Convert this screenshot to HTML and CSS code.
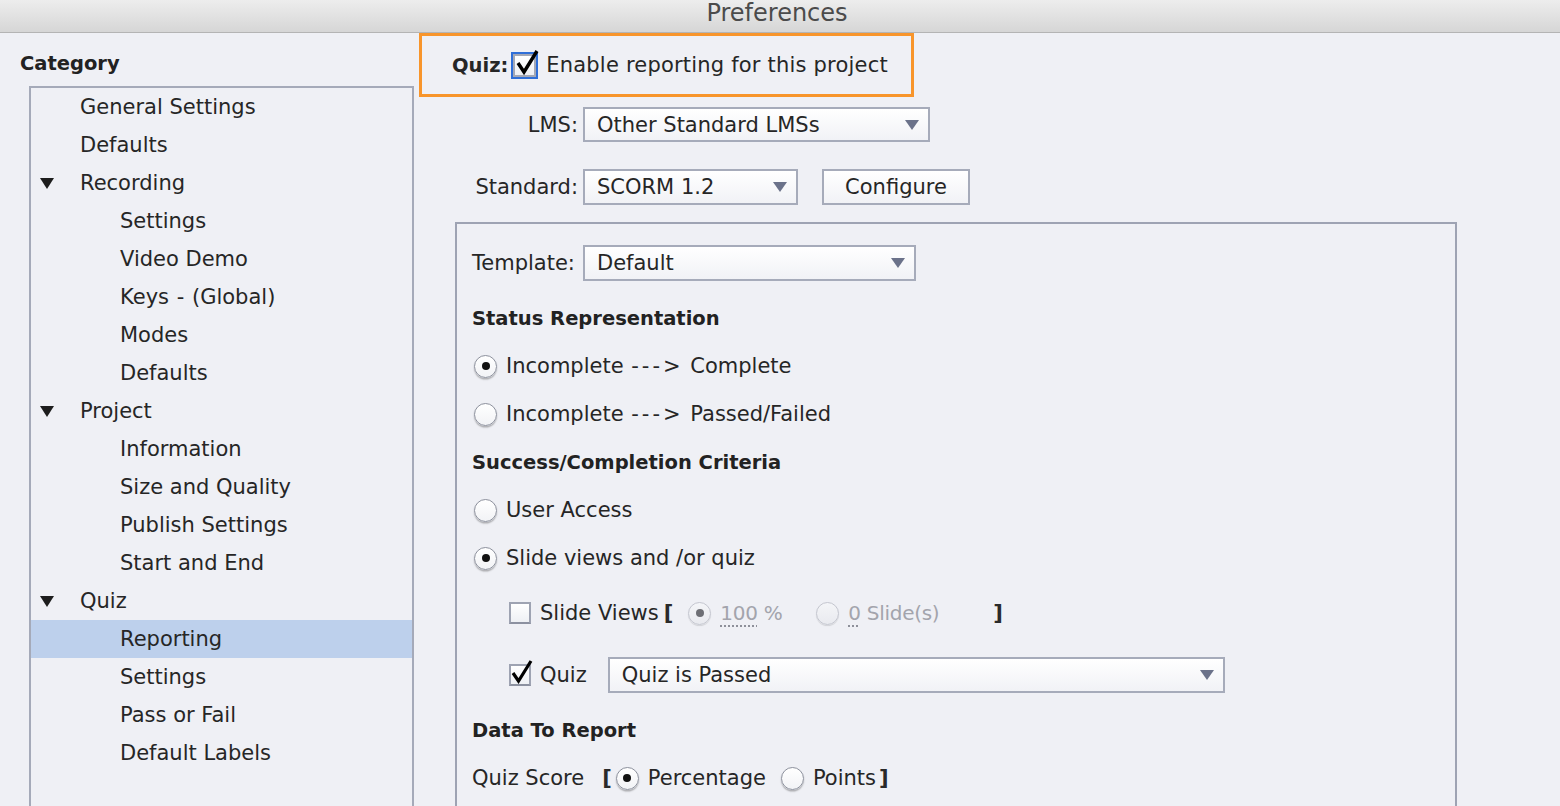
FILE: index.html
```html
<!DOCTYPE html>
<html>
<head>
<meta charset="utf-8">
<title>Preferences</title>
<link rel="stylesheet" href="styles.css">
</head>
<body>
<div class="window">
  <header class="titlebar">Preferences</header>
  <div class="content">
    <aside class="sidebar">
      <h2 class="cat-title">Category</h2>
      <ul class="tree">
        <li class="l1">General Settings</li>
        <li class="l1">Defaults</li>
        <li class="parent"><span class="twisty"><svg width="14" height="11" viewBox="0 0 14 11"><polygon points="0,0 14,0 7,11" fill="#1d1d1d"/></svg></span>Recording</li>
        <li class="l2">Settings</li>
        <li class="l2">Video Demo</li>
        <li class="l2">Keys <span class="dash">-</span> (Global)</li>
        <li class="l2">Modes</li>
        <li class="l2">Defaults</li>
        <li class="parent"><span class="twisty"><svg width="14" height="11" viewBox="0 0 14 11"><polygon points="0,0 14,0 7,11" fill="#1d1d1d"/></svg></span>Project</li>
        <li class="l2">Information</li>
        <li class="l2">Size and Quality</li>
        <li class="l2">Publish Settings</li>
        <li class="l2">Start and End</li>
        <li class="parent"><span class="twisty"><svg width="14" height="11" viewBox="0 0 14 11"><polygon points="0,0 14,0 7,11" fill="#1d1d1d"/></svg></span>Quiz</li>
        <li class="l2 selected">Reporting</li>
        <li class="l2">Settings</li>
        <li class="l2">Pass or Fail</li>
        <li class="l2">Default Labels</li>
      </ul>
    </aside>

    <main class="pane">
      <div class="enable-box">
        <span class="bold">Quiz:</span>
        <span class="focus-ring"><span class="box big"></span><svg class="check check-big" width="26" height="30" viewBox="0 0 26 30"><path d="M5 16 L11 25 L24 4" fill="none" stroke="#000" stroke-width="3.4"/></svg></span>
        <span class="enable-text">Enable reporting for this project</span>
      </div>

      <div class="field-row lms-row">
        <label class="field-label">LMS:</label>
        <div class="select lms-select"><span>Other Standard LMSs</span><svg class="arrow" width="14" height="10" viewBox="0 0 14 10"><polygon points="0,0 14,0 7,10" fill="#6b728a"/></svg></div>
      </div>

      <div class="field-row std-row">
        <label class="field-label">Standard:</label>
        <div class="select std-select"><span>SCORM 1.2</span><svg class="arrow" width="14" height="10" viewBox="0 0 14 10"><polygon points="0,0 14,0 7,10" fill="#6b728a"/></svg></div>
        <button class="button">Configure</button>
      </div>

      <section class="group">
        <div class="template-row">
          <label class="template-label">Template:</label>
          <div class="select tpl-select"><span>Default</span><svg class="arrow" width="14" height="10" viewBox="0 0 14 10"><polygon points="0,0 14,0 7,10" fill="#6b728a"/></svg></div>
        </div>

        <div class="row heading first-heading">Status Representation</div>
        <div class="row"><span class="radio on"></span>Incomplete&nbsp;<span class="arrows">---&gt;</span>&nbsp;Complete</div>
        <div class="row"><span class="radio"></span>Incomplete&nbsp;<span class="arrows">---&gt;</span>&nbsp;Passed/Failed</div>
        <div class="row heading">Success/Completion Criteria</div>
        <div class="row"><span class="radio"></span>User Access</div>
        <div class="row"><span class="radio on"></span>Slide views and /or quiz</div>

        <div class="row sub-row slide-row">
          <span class="box"></span>
          <span class="cb-label">Slide Views</span>
          <span class="br br-open">[</span>
          <span class="radio on disabled"></span>
          <span class="dim"><span class="dotted">100</span> %</span>
          <span class="radio disabled second"></span>
          <span class="dim"><span class="dotted">0</span> Slide(s)</span>
          <span class="br br-close">]</span>
        </div>

        <div class="sub-row quiz-row">
          <span class="cb-wrap"><span class="box"></span><svg class="check check-small" width="24" height="28" viewBox="0 0 24 28"><path d="M4 15 L9.5 23 L22 3" fill="none" stroke="#000" stroke-width="3.2"/></svg></span>
          <span class="cb-label">Quiz</span>
          <div class="select quiz-select"><span>Quiz is Passed</span><svg class="arrow" width="14" height="10" viewBox="0 0 14 10"><polygon points="0,0 14,0 7,10" fill="#6b728a"/></svg></div>
        </div>

        <div class="row heading data-heading">Data To Report</div>
        <div class="row score-row">
          <span>Quiz Score</span>
          <span class="br score-open">[</span>
          <span class="radio on"></span>
          <span>Percentage</span>
          <span class="radio points"></span>
          <span>Points</span>
          <span class="br score-close">]</span>
        </div>
      </section>
    </main>
  </div>
</div>
</body>
</html>
```

FILE: styles.css
```css
* { box-sizing: border-box; }

html, body { margin: 0; padding: 0; }

body {
  width: 1560px;
  height: 806px;
  overflow: hidden;
  background: #eff0f5;
  font-family: "DejaVu Sans", "Liberation Sans", sans-serif;
  font-size: 21px;
  color: #262626;
}

.window { display: flex; flex-direction: column; height: 806px; }

.titlebar {
  height: 33px;
  flex: none;
  border-bottom: 1px solid #b4b4b4;
  background: linear-gradient(#ededed, #d6d6d6);
  text-align: center;
  font-size: 24px;
  line-height: 26px;
  color: #4b4b4b;
  padding-right: 6px;
}

.content { display: flex; flex: 1; min-height: 0; }

/* ---------- sidebar ---------- */
.sidebar {
  width: 419px;
  flex: none;
  display: flex;
  flex-direction: column;
}

.cat-title {
  margin: 12px 0 3px 20px;
  font-size: 19.5px;
  font-weight: bold;
  line-height: 38px;
  color: #222;
}

.tree {
  list-style: none;
  margin: 0 0 0 29px;
  padding: 0;
  width: 385px;
  flex: 1;
  border: 2px solid #a5aab9;
  border-bottom: none;
}

.tree li {
  height: 38px;
  display: flex;
  align-items: center;
  white-space: pre;
}

.tree li.l1 { padding-left: 49px; }
.tree li.l2 { padding-left: 89px; }
.tree li.parent { padding-left: 0; }
.tree li.selected { background: #bdd0ec; }

.dash { letter-spacing: 1px; padding-left: 1px; }

.twisty {
  width: 49px;
  padding-left: 9px;
  display: flex;
  align-items: center;
}

/* ---------- main pane ---------- */
.pane {
  flex: 1;
  display: flex;
  flex-direction: column;
  align-items: flex-start;
  min-width: 0;
}

.bold { font-weight: bold; font-size: 19.5px; }

.enable-box {
  width: 495px;
  height: 64px;
  border: 3px solid #f8952b;
  display: flex;
  align-items: center;
  padding-left: 30px;
}

.focus-ring {
  position: relative;
  width: 27px;
  height: 27px;
  margin-left: 3px;
  border: 2px solid #2f6fd8;
  display: flex;
}

.box {
  display: inline-block;
  width: 22px;
  height: 22px;
  border: 2px solid #9ea3b2;
  border-bottom-color: #8c91a0;
  background: linear-gradient(#ffffff, #eef0f4);
  flex: none;
}

.box.big { width: 23px; height: 23px; border-color: #a3a8b6; }

.check { position: absolute; }
.check-big { left: 0; top: -7px; }
.check-small { left: 0; top: -6px; }

.enable-text { margin-left: 8px; letter-spacing: 0.2px; }

.field-row { display: flex; align-items: center; }
.lms-row { margin-top: 10px; height: 35px; }
.std-row { margin-top: 27px; height: 36px; }

.field-label {
  width: 159px;
  text-align: right;
  margin-right: 5px;
}

.select {
  height: 36px;
  border: 2px solid #a6abba;
  background: linear-gradient(#ffffff, #f1f2f6);
  display: flex;
  align-items: center;
  justify-content: space-between;
  padding: 0 9px 0 12px;
  white-space: nowrap;
}

.arrow { flex: none; }

.lms-select { width: 347px; height: 35px; }
.std-select { width: 215px; padding-right: 9px; }
.tpl-select { width: 333px; padding-right: 9px; }
.quiz-select { width: 617px; padding-right: 9px; }

.button {
  margin-left: 24px;
  width: 148px;
  height: 36px;
  border: 2px solid #a6abba;
  background: linear-gradient(#ffffff, #f1f2f6);
  font-family: inherit;
  font-size: 21px;
  color: #262626;
  padding: 0;
}

/* ---------- group ---------- */
.group {
  margin: 17px 0 0 36px;
  width: 1002px;
  flex: 1;
  border: 2px solid #9ea3b3;
  border-bottom: none;
  padding: 21px 0 0 15px;
}

.template-row { display: flex; align-items: center; height: 36px; }
.template-label { width: 111px; }

.row {
  height: 48px;
  display: flex;
  align-items: center;
  white-space: nowrap;
}

.arrows { letter-spacing: 3px; margin-left: 1px; }

.heading { font-weight: bold; font-size: 19.5px; color: #222; }
.first-heading { margin-top: 13px; }
.data-heading { margin-top: 13px; }

.radio {
  position: relative;
  display: inline-block;
  flex: none;
  width: 23px;
  height: 23px;
  border-radius: 50%;
  border: 1px solid #8d919d;
  background: linear-gradient(#ffffff, #f2f3f6);
  box-shadow: 0 1.5px 1.5px rgba(0, 0, 0, 0.28);
  margin: 0 9px 0 2px;
}

.radio.on::after {
  content: "";
  position: absolute;
  left: 50%;
  top: 50%;
  width: 8px;
  height: 8px;
  margin: -4px 0 0 -4px;
  border-radius: 50%;
  background: #111;
}

.radio.disabled {
  border-color: #c4c6cf;
  box-shadow: 0 1px 1px rgba(0, 0, 0, 0.12);
  background: linear-gradient(#f4f5f8, #e9eaef);
}

.radio.disabled.on::after { background: #6e6f75; }

.sub-row { padding-left: 37px; }

.slide-row { margin-top: 7px; }

.cb-label { margin-left: 9px; }

.br { font-weight: bold; color: #2a2a2a; }
.br-open { margin: 0 13px 0 5px; }
.br-close { margin-left: 54px; }

.dim { color: #a3a4ac; font-size: 20px; letter-spacing: -0.3px; }
.dotted {
  text-decoration: underline dotted #8e909a;
  text-decoration-thickness: 2px;
  text-underline-offset: 5px;
}

.radio.second { margin-left: 34px; }

.quiz-row {
  margin-top: 20px;
  height: 36px;
  display: flex;
  align-items: center;
}

.cb-wrap { position: relative; display: flex; }

.quiz-row .cb-label { margin-right: 21px; }

.score-open { margin: 0 2px 0 18px; }
.radio.points { margin-left: 15px; }
.score-close { margin-left: 3px; }
```
